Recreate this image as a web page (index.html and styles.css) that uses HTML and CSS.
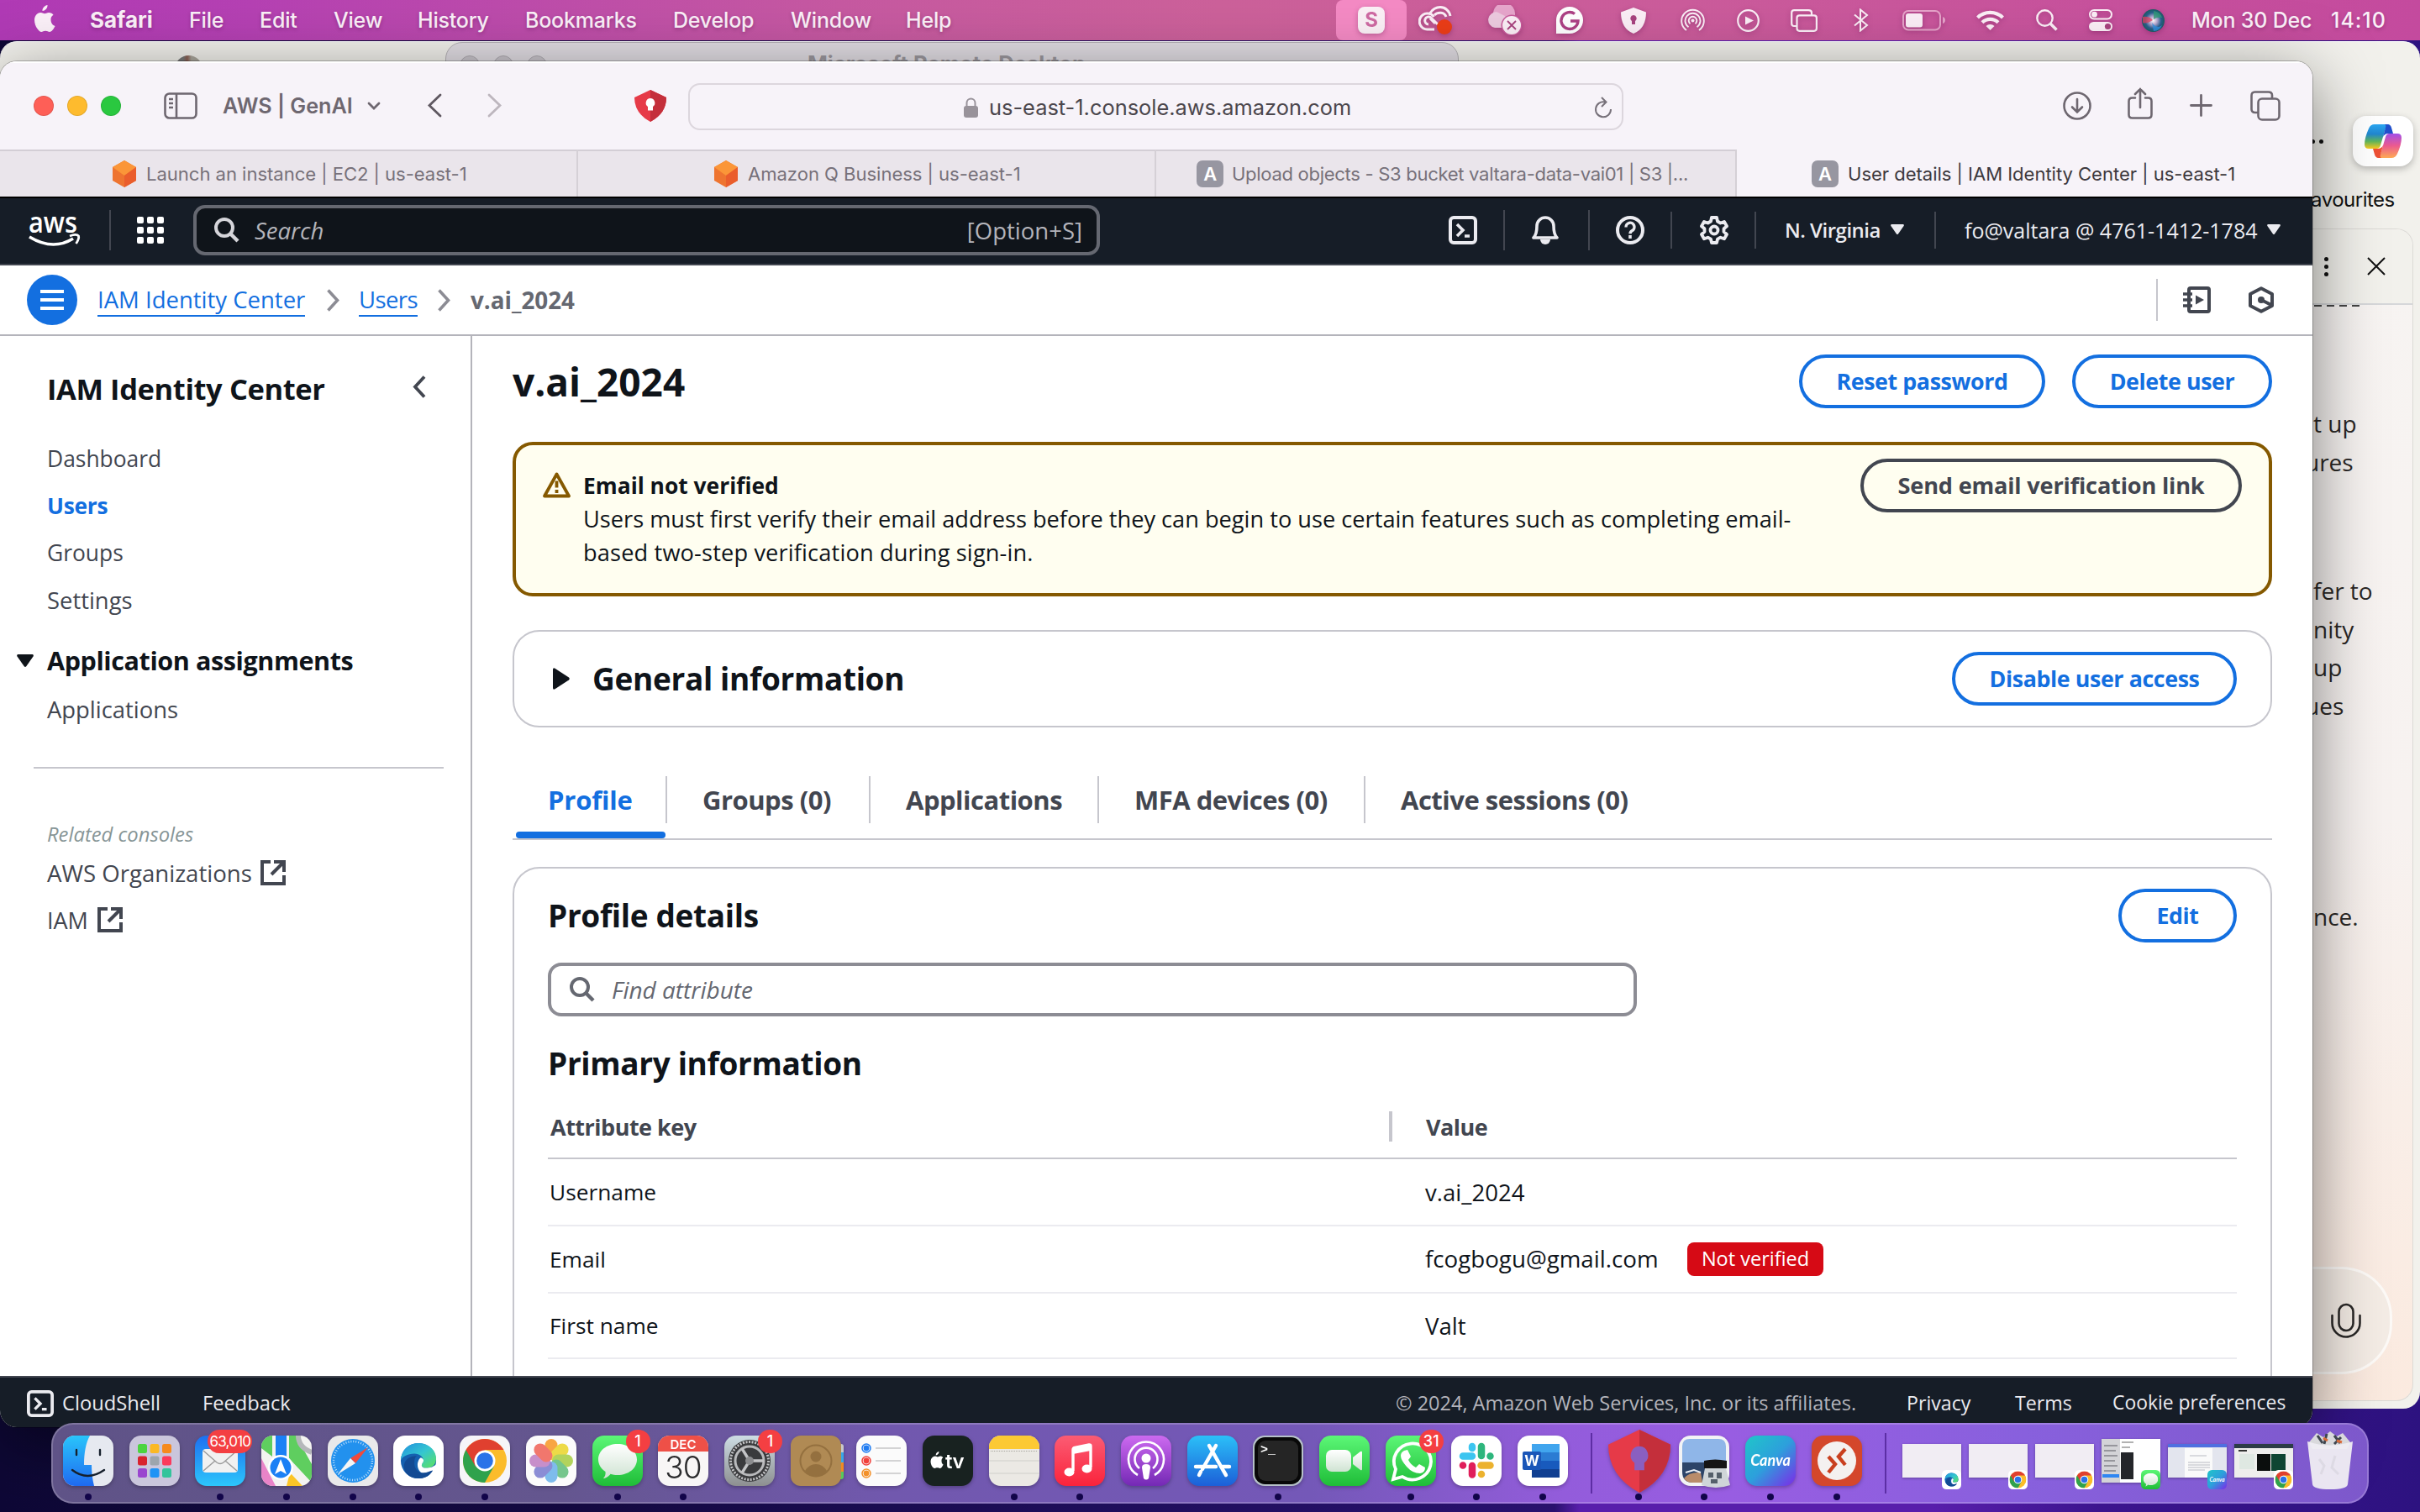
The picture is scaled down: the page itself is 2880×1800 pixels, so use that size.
FILE: index.html
```html
<!DOCTYPE html>
<html lang="en">
<head>
<meta charset="utf-8">
<title>User details | IAM Identity Center | us-east-1</title>
<link rel="stylesheet" href="styles.css">
</head>
<body>
<svg class="defs" width="0" height="0">
  <defs>
    <linearGradient id="gBlue" x1="0" y1="0" x2="0" y2="1"><stop offset="0" stop-color="#1d6ff0"/><stop offset="1" stop-color="#2cc6fb"/></linearGradient>
    <linearGradient id="gBlueR" x1="0" y1="0" x2="0" y2="1"><stop offset="0" stop-color="#2bc0f8"/><stop offset="1" stop-color="#1c5fd8"/></linearGradient>
    <linearGradient id="gGreen" x1="0" y1="0" x2="0" y2="1"><stop offset="0" stop-color="#5cf777"/><stop offset="1" stop-color="#1fbd38"/></linearGradient>
    <linearGradient id="gRed" x1="0" y1="0" x2="0" y2="1"><stop offset="0" stop-color="#fb5c74"/><stop offset="1" stop-color="#fa233b"/></linearGradient>
    <linearGradient id="gPurple" x1="0" y1="0" x2="0" y2="1"><stop offset="0" stop-color="#cd6af0"/><stop offset="1" stop-color="#7429b5"/></linearGradient>
    <linearGradient id="gWhite" x1="0" y1="0" x2="0" y2="1"><stop offset="0" stop-color="#ffffff"/><stop offset="1" stop-color="#cfe3d2"/></linearGradient>
    <linearGradient id="gFinder" x1="0" y1="0" x2="0" y2="1"><stop offset="0" stop-color="#29c5fb"/><stop offset="1" stop-color="#1f6af0"/></linearGradient>
    <linearGradient id="gGear" x1="0" y1="0" x2="0" y2="1"><stop offset="0" stop-color="#cddde4"/><stop offset="1" stop-color="#8d8f90"/></linearGradient>
    <linearGradient id="gCanva" x1="0" y1="0" x2="1" y2="1"><stop offset="0" stop-color="#1fc6c9"/><stop offset=".5" stop-color="#2d9fdc"/><stop offset="1" stop-color="#7d2ae8"/></linearGradient>
    <linearGradient id="gEdge" x1="0" y1="0" x2="1" y2="1"><stop offset="0" stop-color="#1f8fe0"/><stop offset=".5" stop-color="#35c6d0"/><stop offset="1" stop-color="#5fe35a"/></linearGradient>
    <linearGradient id="gCoA" x1="0" y1="0" x2="0" y2="1"><stop offset="0" stop-color="#2ba7f2"/><stop offset=".4" stop-color="#2187d0"/><stop offset=".7" stop-color="#5fb65c"/><stop offset="1" stop-color="#fccb1e"/></linearGradient>
    <linearGradient id="gCoB" x1="0" y1="0" x2="0" y2="1"><stop offset="0" stop-color="#a24fe8"/><stop offset=".5" stop-color="#ec5a8f"/><stop offset="1" stop-color="#ffab55"/></linearGradient>
    <radialGradient id="gSiri"><stop offset="0" stop-color="#ffffff"/><stop offset=".35" stop-color="#b6a9cf"/><stop offset=".7" stop-color="#2a5f8e"/><stop offset="1" stop-color="#1c5c63"/></radialGradient>
    <symbol id="tri" viewBox="0 0 16 12"><path d="M1 0h14q1.4.6.6 2L9 11.400q-1 1-2 0L.4 2Q-.4.600 1 0z"/></symbol>
    <symbol id="cube" viewBox="0 0 28 32"><path d="M14 0l14 8v16l-14 8-14-8V8z" fill="#ee7430"/><path d="M14 0l14 8-14 10L0 8z" fill="#fb9638"/><path d="M14 18L28 8v16l-14 8z" fill="#ea5d2c"/></symbol>
    <symbol id="guard" viewBox="0 0 76 76"><path d="M38 0l38 18Q76 56 38 76Q0 56 0 18z" fill="#e63a48"/><path d="M38 0l38 18Q76 56 38 76z" fill="#c42f3b"/><path d="M38 20a11 11 0 0 1 6 20v9H32v-9a11 11 0 0 1 6-20z" fill="#fff"/></symbol>
    <symbol id="shell" viewBox="0 0 34 34"><rect x="2" y="2" width="30" height="30" rx="4" fill="none" stroke="currentColor" stroke-width="4"/><path d="M10 10l7 7-7 7M19 24h6" fill="none" stroke="currentColor" stroke-width="3.600"/></symbol>
    <symbol id="lens" viewBox="0 0 30 30"><circle cx="12" cy="12" r="10" fill="none" stroke="currentColor" stroke-width="4"/><path d="M19 19l9 9" stroke="currentColor" stroke-width="4.400"/></symbol>
    <symbol id="ext" viewBox="0 0 30 30"><path d="M12 2H2v26h26V18M16 2h12v12M27 3L13 17" fill="none" stroke="currentColor" stroke-width="4"/></symbol>
    <symbol id="chrome" viewBox="0 0 52 52"><circle cx="26" cy="26" r="26" fill="#fbbc2b"/><path d="M26 26L3.500 13A26 26 0 0 0 26 52l11-19.500z" fill="#2fa24c"/><path d="M26 13h22.500a26 26 0 0 0-45 0L15 33z" fill="#e0402f"/><circle cx="26" cy="26" r="12.500" fill="#fff"/><circle cx="26" cy="26" r="9.800" fill="#2b73e8"/></symbol>
    <symbol id="edge" viewBox="0 0 46 46"><circle cx="23" cy="23" r="22" fill="#1560b0"/><path d="M1 22C2 8 12 1 23 1c13 0 22 9 22 19 0 9-7 12-12 12-6 0-7-3-5-6 3-6-2-12-10-12C9 14 3 18 1 22z" fill="url(#gEdge)"/><path d="M28 26c-2 3-1 6 5 6 5 0 10-2 14-6l-1 10c-3 3-8 4-13 4-7 0-12-6-11-14 1-4 2-6 4-7 4 2 4 4 2 7z" fill="#fff"/><path d="M18 24c-1 8 4 14 11 14 5 0 9-3 12-3-4 7-10 10-18 10C12 45 5 38 5 30c0-8 7-13 16-13-2 1-3 4-3 7z" fill="#134a93"/></symbol>
    <symbol id="bubble" viewBox="0 0 46 42"><path d="M23 0C36 0 46 8 46 18.500S36 37 23 37c-3 0-6-.4-8.500-1.300C13 38 9 41 6 41c2-2 3-5 2.500-8C3 29.500 0 24 0 18.500 0 8 10 0 23 0z" fill="url(#gWhite)"/></symbol>
  </defs>
</svg>

<div class="desktop">

  <div class="menubar">
    <div class="menu">
      <svg width="27" height="33" viewBox="0 0 27 33" fill="#fbf0f8"><path d="M18.500 0c.3 3.500-2.600 7-6 7C12.200 3.600 15.300.4 18.500 0zM22.500 17c0-3.400 2.800-5 3-5.200-1.600-2.400-4.200-2.700-5-2.800-2.200-.2-4.200 1.300-5.300 1.300S12.400 9 10.500 9C8 9 5.600 10.500 4.300 12.700c-2.700 4.700-.7 11.600 2 15.400 1.300 1.800 2.800 3.900 4.800 3.800s2.700-1.200 5-1.200 3 1.200 5 1.200c2.100 0 3.400-1.900 4.700-3.700.8-1.200 1.100-1.700 1.700-3.100-4.500-1.700-5-6-5-8.100z" transform="translate(-2 0)"/></svg>
      <b class="app">Safari</b><span>File</span><span>Edit</span><span>View</span><span>History</span><span>Bookmarks</span><span>Develop</span><span>Window</span><span>Help</span>
    </div>
    <div class="status">
      <div class="rec"><svg width="32" height="32" viewBox="0 0 32 32"><rect width="32" height="32" rx="8" fill="#fbf0f6"/><text x="16" y="24" text-anchor="middle" class="s-letter">S</text></svg></div>
      <svg width="40" height="34" viewBox="0 0 40 34" fill="none" stroke="#fbeef6" stroke-width="3"><path d="M19 28h-8.500a9.500 9.500 0 1 1 8-15"/><path d="M14 8.500C17 4 21 1.600 26 1.600c6 0 11 4.400 12 10.400M20 21l-6-6"/><path d="M12 22a4.500 4.500 0 1 1 3-8l8 8M19 11c4-4 12-4 14 2"/><circle cx="31" cy="25" r="9" fill="#ec3d17" stroke="none"/></svg>
      <svg width="41" height="36" viewBox="0 0 41 36"><path d="M7 9a12 12 0 0 1 26 3l-4 8-20-6z" fill="#e6a5cb"/><path d="M9 27A9 9 0 1 1 12 8.500l18 9L20 27z" fill="#eccadf"/><circle cx="29" cy="24" r="12.500" fill="#c85a9b"/><circle cx="29" cy="24" r="11" fill="#fbeef6"/><path d="M24 19l10 10M34 19L24 29" stroke="#a8437f" stroke-width="1.800"/></svg>
      <svg width="32" height="32" viewBox="0 0 32 32"><path d="M0 32V16a16 16 0 1 1 16 16z" fill="#fff"/><path d="M22 8.500A10 10 0 1 0 26 17h-9" fill="none" stroke="#ad4185" stroke-width="3.400"/></svg>
      <svg width="30" height="31" viewBox="0 0 30 31"><path d="M15 0l15 5.500Q30 25 15 31Q0 25 0 5.500z" fill="#fbeef6"/><path d="M15 9a4 4 0 0 1 2 7.300V20h-4v-3.700A4 4 0 0 1 15 9z" fill="#a8437f"/></svg>
      <svg width="29" height="29" viewBox="0 0 29 29" fill="none" stroke="#fbeef6" stroke-width="1.900"><path d="M7 26A13.300 13.300 0 1 1 22 26M9.500 22.300a9 9 0 1 1 10 0M11.500 18.300a4.800 4.800 0 1 1 6 0"/><circle cx="14.500" cy="14.600" r="2" fill="#fbeef6" stroke="none"/></svg>
      <svg width="27" height="27" viewBox="0 0 27 27"><circle cx="13.500" cy="13.500" r="12.300" fill="none" stroke="#fbeef6" stroke-width="2.200"/><path d="M10 8.500l10 5-10 5z" fill="#fbeef6"/></svg>
      <svg width="32" height="27" viewBox="0 0 32 27" fill="none" stroke="#fbeef6" stroke-width="2.200"><path d="M7 20H4q-2.800 0-2.800-3V4q0-2.800 3-2.800h17Q25 1.200 25 4v3"/><rect x="7.500" y="7.300" width="23.400" height="18.500" rx="3"/></svg>
      <svg width="18" height="28" viewBox="0 0 18 28" fill="none" stroke="#fbeef6" stroke-width="2"><path d="M1 7.500l15 12.500-8 6.500V1.500L16 8 1 20.500"/></svg>
      <svg width="51" height="25" viewBox="0 0 51 25"><rect x="1" y="1" width="44" height="22.500" rx="6" fill="none" stroke="#e5a3c9" stroke-width="2"/><rect x="4" y="4" width="20" height="16.500" rx="3" fill="#fbeef6"/><path d="M48 8q3 1 3 4t-3 4z" fill="#e5a3c9"/></svg>
      <svg width="33" height="25" viewBox="0 0 33 25" fill="none" stroke="#fbeef6" stroke-width="4.200"><path d="M1.500 9a21.500 21.500 0 0 1 30 0M7 14.700a13.500 13.500 0 0 1 19 0"/><path d="M16.500 24l-5-5a7 7 0 0 1 10 0z" fill="#fbeef6" stroke="none"/></svg>
      <svg width="26" height="26" viewBox="0 0 26 26" fill="none" stroke="#fbeef6"><circle cx="10.500" cy="10.500" r="9.200" stroke-width="2.400"/><path d="M17 17l7.500 7.500" stroke-width="3.600"/></svg>
      <svg width="28" height="26" viewBox="0 0 28 26"><rect x="1" y="1" width="26" height="10.500" rx="5.200" fill="none" stroke="#fbeef6" stroke-width="2"/><circle cx="6.500" cy="6.200" r="3.400" fill="#fbeef6"/><rect y="15" width="28" height="11" rx="5.500" fill="#fbeef6"/><circle cx="22.500" cy="20.500" r="3.600" fill="#a8437f"/></svg>
      <svg width="27" height="27" viewBox="0 0 27 27"><circle cx="13.500" cy="13.500" r="13.500" fill="url(#gSiri)"/><path d="M1 9q8-1 12 4-8 5-12 3z" fill="#e0405f" opacity=".75"/><path d="M14 2q8 1 10 8-6-1-10 2z" fill="#2f9a76" opacity=".8"/><path d="M12 16q6 8 12 3-3 7-10 7z" fill="#2f8fe0" opacity=".8"/></svg>
      <span>Mon 30 Dec</span><span class="time">14:10</span>
    </div>
  </div>

  <div class="window edge-window">
    <div class="avatar"></div>
    <div class="edge-side">
      <div class="edge-tools"><span class="dots"><i></i><i></i></span>
        <div class="copilot"><svg width="44" height="40" viewBox="0 0 44 40"><path d="M12 0h18q-4 1-6 8l-5 17q-1 4-5 4H5q-5 0-5-5Q0 16 5 5 7 0 12 0z" fill="url(#gCoA)"/><path d="M24 0h3q4 0 5 4l2 7h-6q-4 0-6 4l3-11q1-3-1-4z" fill="#2150cc"/><path d="M32 40H14q4-1 6-8l5-17q1-4 5-4h9q5 0 5 5 0 8-5 19-2 5-7 5z" fill="url(#gCoB)"/><path d="M20 40h-3q-4 0-5-4l-2-7h6q4 0 6-4l-3 11q-1 3 1 4z" fill="#ee5136"/></svg></div>
      </div>
      <div class="fav">avourites</div>
      <div class="edge-panel">
        <div class="edge-panel-head"><span class="vdots"><i></i><i></i><i></i></span><svg width="22" height="22" viewBox="0 0 22 22" stroke="#111" stroke-width="2"><path d="M1 1l20 20M21 1L1 21"/></svg></div>
        <div class="scrolled"><i></i><i></i><i></i><i></i></div>
        <div class="edge-text">
          <p>t up</p><p class="in-s">ures</p>
          <p class="gap-a">fer to</p><p>nity</p><p>up</p><p class="in-s">ues</p>
          <p class="gap-b">nce.</p>
        </div>
        <div class="mic"><svg width="36" height="43" viewBox="0 0 36 43" fill="none" stroke="#2b2928" stroke-width="2.600" stroke-linecap="round"><rect x="9.500" y="2" width="17" height="31" rx="8.500"/><path d="M1.500 15v9a16.500 16.500 0 0 0 33 0v-9"/></svg></div>
      </div>
    </div>
  </div>

  <div class="window rd-window"><i></i><i></i><i></i><span>Microsoft Remote Desktop</span></div>

  <div class="window safari">
    <div class="toolbar">
      <div class="lights"><i class="red"></i><i class="amber"></i><i class="green"></i></div>
      <svg width="40" height="32" viewBox="0 0 40 32" fill="none" stroke="#6e6770" stroke-width="2.600"><rect x="1.500" y="1.500" width="37" height="29" rx="5"/><path d="M15 2v28M6 8h5M6 13h5M6 18h5"/></svg>
      <span class="profile-name">AWS | GenAI</span>
      <svg width="16" height="10" viewBox="0 0 16 10" fill="none" stroke="#6e6770" stroke-width="2.800" stroke-linecap="round"><path d="M2 2l6 6 6-6"/></svg>
      <svg width="18" height="29" viewBox="0 0 18 29" fill="none" stroke="#5f5861" stroke-width="2.800" stroke-linecap="round"><path d="M16 2L3 14.500 16 27"/></svg>
      <svg width="18" height="29" viewBox="0 0 18 29" fill="none" stroke="#bdb6be" stroke-width="2.800" stroke-linecap="round"><path d="M2 2l13 12.500L2 27"/></svg>
      <svg width="38" height="38" viewBox="0 0 76 76"><use href="#guard"/></svg>
      <div class="address">
        <svg width="17" height="24" viewBox="0 0 17 24"><rect y="10" width="17" height="14" rx="3" fill="#98929a"/><path d="M3.500 11V6.500a5 5 0 0 1 10 0V11" fill="none" stroke="#98929a" stroke-width="2"/></svg>
        <span>us-east-1.console.aws.amazon.com</span>
        <svg class="reload" width="22" height="26" viewBox="0 0 22 26" fill="none" stroke="#77717a" stroke-width="2"><path d="M13 6.500a9 9 0 1 0 7 8.500M9 1l5.500 5.500L9 12"/></svg>
      </div>
      <svg width="34" height="34" viewBox="0 0 34 34" fill="none" stroke="#6e6770" stroke-width="2.600" stroke-linecap="round"><circle cx="17" cy="17" r="15.500"/><path d="M17 9v15M11 18.500l6 6 6-6"/></svg>
      <svg class="up" width="30" height="38" viewBox="0 0 30 38" fill="none" stroke="#6e6770" stroke-width="2.600" stroke-linecap="round"><path d="M9 12.500H5.500q-4 0-4 4v16q0 4 4 4h19q4 0 4-4v-16q0-4-4-4H21M15 24V2M9 8l6-6 6 6"/></svg>
      <svg width="27" height="27" viewBox="0 0 27 27" stroke="#6e6770" stroke-width="2.800" stroke-linecap="round"><path d="M13.500 1.500v24M1.500 13.500h24"/></svg>
      <svg width="36" height="36" viewBox="0 0 36 36" fill="none" stroke="#6e6770" stroke-width="2.600"><path d="M9 26H6q-4.500 0-4.500-4V6q0-4.500 4-4.500h16q4.500 0 4.500 4V9"/><rect x="9.500" y="9.500" width="25" height="25" rx="4.500"/></svg>
    </div>
    <div class="tabs">
      <div class="tab"><svg width="28" height="32"><use href="#cube"/></svg><span>Launch an instance | EC2 | us-east-1</span></div>
      <div class="tab t2"><svg width="28" height="32"><use href="#cube"/></svg><span>Amazon Q Business | us-east-1</span></div>
      <div class="tab t3"><i class="fav-a">A</i><span>Upload objects - S3 bucket valtara-data-vai01 | S3 |...</span></div>
      <div class="tab active"><i class="fav-a">A</i><span>User details | IAM Identity Center | us-east-1</span></div>
    </div>

    <header class="aws-nav">
      <svg class="aws-logo" width="64" height="48" viewBox="0 0 64 48"><text x="1" y="27" class="aws-word" textLength="58" lengthAdjust="spacingAndGlyphs">aws</text><path d="M2 32q28 17 52 2" fill="none" stroke="#fff" stroke-width="3.600"/><path d="M50 31q8-3 10.500 0 1 3-3 9" fill="none" stroke="#fff" stroke-width="2.800"/></svg>
      <i class="vr tall"></i>
      <div class="dots9"><i></i><i></i><i></i><i></i><i></i><i></i><i></i><i></i><i></i></div>
      <div class="nav-search"><svg width="30" height="30"><use href="#lens"/></svg><em>Search</em><span>[Option+S]</span></div>
      <svg width="34" height="34"><use href="#shell"/></svg>
      <i class="vr tall"></i>
      <svg width="32" height="34" viewBox="0 0 32 34"><path d="M2 26h28q-4-4-4-14a10 10 0 0 0-20 0q0 10-4 14z" fill="none" stroke="currentColor" stroke-width="3.600" stroke-linejoin="round"/><path d="M10 28a6 6 0 0 0 12 0z" fill="currentColor"/></svg>
      <i class="vr tall"></i>
      <svg width="34" height="34" viewBox="0 0 34 34" fill="none" stroke="currentColor" stroke-width="4"><circle cx="17" cy="17" r="15"/><path d="M12 13.500a5 5 0 1 1 7.500 4q-2.500 1.500-2.500 3.700" stroke-width="3.400"/><path d="M17 23v4" stroke-width="3.600"/></svg>
      <i class="vr"></i>
      <svg width="34" height="34" viewBox="0 0 34 34" fill="none" stroke="currentColor" stroke-width="3.800" stroke-linejoin="round"><path d="M14 2h6l1 4.500 3.500 2L29 7l3 5.300-3.500 3v3.600L32 22l-3 5.200-4.500-1.500-3.500 2L20 32h-6l-1-4.300-3.500-2L5 27.200 2 22l3.500-3.100v-3.600L2 12.300 5 7l4.500 1.500 3.500-2z"/><circle cx="17" cy="17" r="4.500"/></svg>
      <i class="vr"></i>
      <span class="nv">N. Virginia</span><svg class="caret" width="16" height="12" fill="currentColor"><use href="#tri"/></svg>
      <i class="vr"></i>
      <span class="acct">fo@valtara @ 4761-1412-1784</span><svg class="caret" width="16" height="12" fill="currentColor"><use href="#tri"/></svg>
    </header>

    <div class="crumbs">
      <div class="burger"><i></i><i></i><i></i></div>
      <a class="c1">IAM Identity Center</a>
      <svg width="15" height="27" viewBox="0 0 15 27" fill="none" stroke="#8c8c94" stroke-width="3.600"><path d="M1.500 1.500l11 12-11 12"/></svg>
      <a class="c2">Users</a>
      <svg width="15" height="27" viewBox="0 0 15 27" fill="none" stroke="#8c8c94" stroke-width="3.600"><path d="M1.500 1.500l11 12-11 12"/></svg>
      <b>v.ai_2024</b>
      <i class="vr light"></i>
      <svg width="33" height="32" viewBox="0 0 33 32" fill="none" stroke="#424650" stroke-width="4"><rect x="7" y="2" width="24" height="28" rx="2"/><path d="M0 9h11M0 16h11M0 23h11" stroke-width="3.400"/><path d="M15 10.500v11l10-5.500z" fill="#424650" stroke="none"/></svg>
      <svg width="30" height="32" viewBox="0 0 30 32" fill="none" stroke="#424650" stroke-width="4" stroke-linejoin="round"><path d="M15 2.300L28 9v14l-13 6.700L2 23V9z"/><circle cx="15" cy="16" r="4" fill="#424650" stroke="none"/><path d="M15 16l12 6"/></svg>
    </div>

    <div class="body">
      <nav class="side">
        <div class="side-title"><h2>IAM Identity Center</h2><svg width="16" height="27" viewBox="0 0 16 27" fill="none" stroke="#424650" stroke-width="3.800"><path d="M14 1.500L3 13.500l11 12"/></svg></div>
        <a>Dashboard</a><a class="on">Users</a><a>Groups</a><a class="wide-a">Settings</a>
        <div class="section"><svg width="20" height="15" fill="#0f141a"><use href="#tri"/></svg><b>Application assignments</b></div>
        <a class="wide-a">Applications</a>
        <hr>
        <em>Related consoles</em>
        <a class="orgs">AWS Organizations <svg width="30" height="30"><use href="#ext"/></svg></a>
        <a class="iam">IAM <svg width="30" height="30"><use href="#ext"/></svg></a>
      </nav>

      <main class="main">
        <div class="head"><h1>v.ai_2024</h1><button class="btn w-reset">Reset password</button><button class="btn w-del">Delete user</button></div>
        <div class="alert">
          <svg width="33" height="31" viewBox="0 0 33 31" fill="none" stroke="#855900" stroke-width="3.800" stroke-linejoin="round"><path d="M16.500 2.500L31 28.500H2z"/><path d="M16.500 10.500v8M16.500 21v4"/></svg>
          <div class="alert-text"><b>Email not verified</b><p>Users must first verify their email address before they can begin to use certain features such as completing email-</p><p class="l2">based two-step verification during sign-in.</p></div>
          <button class="btn dark w-send">Send email verification link</button>
        </div>
        <div class="card general"><svg width="20" height="26" viewBox="0 0 20 26"><path d="M0 2Q0-.5 2.500.7L19 11.500q1.500 1.500 0 3L2.500 25.300Q0 26.500 0 24z" fill="#0f141a"/></svg><h3>General information</h3><button class="btn w-dis">Disable user access</button></div>
        <div class="ptabs"><span class="pt1">Profile</span><span class="pt2">Groups (0)</span><span class="pt3">Applications</span><span class="pt4">MFA devices (0)</span><span class="pt5">Active sessions (0)</span></div>
        <div class="card details">
          <div class="details-head"><h3>Profile details</h3><button class="btn w-edit">Edit</button></div>
          <div class="find"><svg width="30" height="30"><use href="#lens"/></svg><em>Find attribute</em></div>
          <h3 class="primary">Primary information</h3>
          <div class="row th"><b>Attribute key</b><i></i><b>Value</b></div>
          <div class="row"><span>Username</span><span class="val">v.ai_2024</span></div>
          <div class="row"><span>Email</span><span class="mail">fcogbogu@gmail.com</span><u class="pill">Not verified</u></div>
          <div class="row short"><span>First name</span><span class="val">Valt</span></div>
        </div>
      </main>
    </div>

    <footer class="foot">
      <svg width="34" height="34"><use href="#shell"/></svg><span class="f1">CloudShell</span><span class="f2">Feedback</span><span class="f3">© 2024, Amazon Web Services, Inc. or its affiliates.</span><span class="f4">Privacy</span><span class="f5">Terms</span><span class="f6">Cookie preferences</span>
    </footer>
  </div>

  <div class="dock">
    <div class="apps-row">
      <div class="ic run"><svg viewBox="0 0 60 60"><rect width="60" height="60" rx="14" fill="#e6e9f0"/><path d="M14 0h18c-5 9-7 21-7 35h9c0 9 1 17 3 25H14A14 14 0 0 1 0 46V14A14 14 0 0 1 14 0z" fill="url(#gFinder)"/><path d="M16 17v6M44 17v6M11 41q18 14 38 0" fill="none" stroke="#16202c" stroke-width="2.400" stroke-linecap="round"/></svg></div>
      <div class="ic"><svg viewBox="0 0 60 60"><rect width="60" height="60" rx="14" fill="#cac6dc"/><g><rect x="10" y="10" width="11" height="11" rx="2.500" fill="#4cd43f"/><rect x="24.500" y="10" width="11" height="11" rx="2.500" fill="#fbb824"/><rect x="39" y="10" width="11" height="11" rx="2.500" fill="#f68a1e"/><rect x="10" y="24.500" width="11" height="11" rx="2.500" fill="#d9222e"/><rect x="24.500" y="24.500" width="11" height="11" rx="2.500" fill="#9da5ad"/><rect x="39" y="24.500" width="11" height="11" rx="2.500" fill="#fb3a5c"/><rect x="10" y="39" width="11" height="11" rx="2.500" fill="#9a45cf"/><rect x="24.500" y="39" width="11" height="11" rx="2.500" fill="#1f93f5"/><rect x="39" y="39" width="11" height="11" rx="2.500" fill="#33c49b"/></g></svg></div>
      <div class="ic run"><svg viewBox="0 0 60 60"><rect width="60" height="60" rx="14" fill="url(#gBlue)"/><rect x="9" y="16" width="42" height="28" rx="4" fill="#f1f1f1"/><path d="M10 18l16 14q4 3 8 0l16-14M10 42l14-12M50 42L36 30" fill="none" stroke="#9a9a9a" stroke-width="1.400"/></svg><span class="badge wide">63,010</span></div>
      <div class="ic run"><svg viewBox="0 0 60 60"><clipPath id="r"><rect width="60" height="60" rx="14"/></clipPath><g clip-path="url(#r)"><path d="M0 0h60v60H0z" fill="#f3f3f1"/><path d="M0 0h13v25L0 15zM33 0h8l19 34v22L33 27z" fill="#5fce5f"/><path d="M0 27l17 33H0z" fill="#e884c8"/><path d="M34 44l15 16H30z" fill="#fcc526"/><path d="M17 0h13v28H17z" fill="#1b80f5"/><path d="M44 0q0 14 16 20" fill="none" stroke="#b5b7ba" stroke-width="6"/></g><circle cx="23" cy="38" r="15" fill="#fff"/><circle cx="23" cy="38" r="12.500" fill="#1b80f5"/><path d="M23 28l7 18-7-4-7 4z" fill="#fff"/></svg></div>
      <div class="ic run"><svg viewBox="0 0 60 60"><rect width="60" height="60" rx="14" fill="#e9e9ea"/><circle cx="30" cy="30" r="26" fill="#2291ee"/><circle cx="30" cy="30" r="23" fill="none" stroke="#bfe0fb" stroke-width="2.500" stroke-dasharray="1 2"/><path d="M48 14L33 33l-6-6z" fill="#f04a3c"/><path d="M12 46l15-19 6 6z" fill="#f5f5f5"/></svg></div>
      <div class="ic run"><svg viewBox="0 0 60 60"><rect width="60" height="60" rx="14" fill="#fff"/><svg x="8" y="8" width="44" height="44"><use href="#edge"/></svg></svg></div>
      <div class="ic run"><svg viewBox="0 0 60 60"><rect width="60" height="60" rx="14" fill="#f6f5f8"/><svg x="4" y="4" width="52" height="52"><use href="#chrome"/></svg></svg></div>
      <div class="ic"><svg viewBox="0 0 60 60"><rect width="60" height="60" rx="14" fill="#fbfbfb"/><g opacity=".88"><rect x="22.500" y="4" width="15" height="25" rx="7.500" fill="#f89a2b"/><rect x="22.500" y="4" width="15" height="25" rx="7.500" fill="#ecd62f" transform="rotate(45 30 30)"/><rect x="22.500" y="4" width="15" height="25" rx="7.500" fill="#a9ce47" transform="rotate(90 30 30)"/><rect x="22.500" y="4" width="15" height="25" rx="7.500" fill="#63bf7d" transform="rotate(135 30 30)"/><rect x="22.500" y="4" width="15" height="25" rx="7.500" fill="#6db4ea" transform="rotate(180 30 30)"/><rect x="22.500" y="4" width="15" height="25" rx="7.500" fill="#7c7ed0" transform="rotate(225 30 30)"/><rect x="22.500" y="4" width="15" height="25" rx="7.500" fill="#c081c4" transform="rotate(270 30 30)"/><rect x="22.500" y="4" width="15" height="25" rx="7.500" fill="#f0655a" transform="rotate(315 30 30)"/></g></svg></div>
      <div class="ic run"><svg viewBox="0 0 60 60"><rect width="60" height="60" rx="14" fill="url(#gGreen)"/><svg x="7" y="10" width="46" height="42"><use href="#bubble"/></svg></svg><span class="badge">1</span></div>
      <div class="ic run"><svg viewBox="0 0 60 60"><rect width="60" height="60" rx="14" fill="#f8f6f6"/><path d="M0 19v-5A14 14 0 0 1 14 0h32a14 14 0 0 1 14 14v5z" fill="#ee5047"/><text x="30" y="15.500" class="cal-m">DEC</text><text x="30" y="51" class="cal-d">30</text></svg></div>
      <div class="ic"><svg viewBox="0 0 60 60"><rect width="60" height="60" rx="14" fill="url(#gGear)"/><circle cx="30" cy="30" r="25" fill="#3a3b3d"/><circle cx="30" cy="30" r="22.500" fill="none" stroke="#c3c4c6" stroke-width="3" stroke-dasharray="2 1.600"/><circle cx="30" cy="30" r="17" fill="none" stroke="#b9babc" stroke-width="3"/><path d="M30 30h17M30 30l-9-14.500M30 30l-9 14.500" stroke="#c3c4c6" stroke-width="3.400"/><circle cx="30" cy="30" r="5" fill="#8b8c8e"/></svg><span class="badge">1</span></div>
      <div class="ic"><svg viewBox="0 0 60 60"><path d="M56 10h4q3 0 3 3v7h-7z" fill="#c9c9c9"/><path d="M56 20h7v12h-7z" fill="#39a7e8"/><path d="M56 32h7v11h-7z" fill="#f08a24"/><path d="M56 43h7v6q0 3-3 3h-4z" fill="#58c95a"/><rect width="60" height="60" rx="12" fill="#b08a54"/><circle cx="30" cy="30" r="18.500" fill="none" stroke="#94703f" stroke-width="2"/><circle cx="30" cy="25" r="6.500" fill="#94703f"/><path d="M17 42q5-8 13-8t13 8q-6 6-13 6t-13-6z" fill="#94703f"/></svg></div>
      <div class="ic"><svg viewBox="0 0 60 60"><rect width="60" height="60" rx="14" fill="#fbfbfb"/><g stroke-width="1.500" fill="none"><circle cx="12" cy="15" r="5" stroke="#1f7cf2"/><circle cx="12" cy="30" r="5" stroke="#f1403a"/><circle cx="12" cy="45" r="5" stroke="#f3912a"/><path d="M23 15h30M23 30h30M23 45h30" stroke="#c6c6c8"/></g><circle cx="12" cy="15" r="3.400" fill="#1f7cf2"/><circle cx="12" cy="30" r="3.400" fill="#f1403a"/><circle cx="12" cy="45" r="3.400" fill="#f3912a"/></svg></div>
      <div class="ic"><svg viewBox="0 0 60 60"><rect width="60" height="60" rx="14" fill="#182220"/><path d="M19.500 19c.2 2.200-1.700 4.300-3.800 4.400-.2-2.200 1.700-4.200 3.800-4.400zM22.500 29.500c0-2.200 1.800-3.200 1.800-3.200-1-1.500-2.600-1.700-3.100-1.700-1.400-.1-2.600.8-3.300.8s-1.700-.8-2.900-.8c-3.600.1-6 3.700-5.300 8 .5 3.200 2.500 6.400 4.700 6.300 1.200 0 1.700-.7 3.100-.7s1.800.7 3.100.7c1.300 0 2.100-1.200 2.900-2.400.5-.7.7-1.100 1.100-2-2.100-.9-2.100-3.500-2.100-5z" fill="#fff"/><text x="27" y="39" class="tv">tv</text></svg></div>
      <div class="ic run"><svg viewBox="0 0 60 60"><rect width="60" height="60" rx="14" fill="#ebe9e4"/><path d="M0 16v-2A14 14 0 0 1 14 0h32a14 14 0 0 1 14 14v2z" fill="#fcc934"/><path d="M2 18.500h56" stroke="#a9a7a0" stroke-width="1" stroke-dasharray="1 1"/><path d="M0 30h60M0 45h60" stroke="#d9d7d2" stroke-width="1.400"/></svg></div>
      <div class="ic run"><svg viewBox="0 0 60 60"><rect width="60" height="60" rx="14" fill="url(#gRed)"/><path d="M22 42V17q0-2 2-2.500L41 11q2-.3 2 1.500V38" fill="none" stroke="#fff" stroke-width="3.400"/><path d="M22 15l21-4v7l-21 4z" fill="#fff"/><ellipse cx="17.500" cy="43.500" rx="6" ry="5" fill="#fff"/><ellipse cx="38.500" cy="39.500" rx="6" ry="5" fill="#fff"/></svg></div>
      <div class="ic"><svg viewBox="0 0 60 60"><rect width="60" height="60" rx="14" fill="url(#gPurple)"/><g fill="none" stroke="#fff" stroke-width="2.600"><path d="M20 47a21 21 0 1 1 20 0"/><path d="M22 39a13.500 13.500 0 1 1 16 0"/></g><circle cx="30" cy="27" r="5.500" fill="#fff"/><path d="M25 38q0-4 5-4t5 4l-2 13q-3 3-6 0z" fill="#fff"/></svg></div>
      <div class="ic"><svg viewBox="0 0 60 60"><rect width="60" height="60" rx="14" fill="url(#gBlueR)"/><path d="M26 12l17 30 3 5M34 12L18 40M10 37h24M40 37h10M16 43l-2 4" fill="none" stroke="#fff" stroke-width="4.400" stroke-linecap="round"/></svg></div>
      <div class="ic run"><svg viewBox="0 0 60 60"><rect width="60" height="60" rx="14" fill="#b6c1c8"/><rect x="2" y="2" width="56" height="56" rx="12.500" fill="#080808"/><rect x="6" y="6" width="48" height="48" rx="9" fill="#252525"/><text x="9" y="21" class="term">&gt;_</text></svg></div>
      <div class="ic"><svg viewBox="0 0 60 60"><rect width="60" height="60" rx="14" fill="url(#gGreen)"/><rect x="8" y="17" width="30" height="26" rx="7" fill="url(#gWhite)"/><path d="M40 26l9-7q2-1 2 1v20q0 2-2 1l-9-7z" fill="url(#gWhite)"/></svg></div>
      <div class="ic run"><svg viewBox="0 0 60 60"><rect width="60" height="60" rx="14" fill="url(#gGreen)"/><path d="M9 52l3-12a22 21.500 0 1 1 8 9z" fill="none" stroke="#fff" stroke-width="3.800"/><path d="M22 18l4-1 4 8-3 4q3 6 9 9l4-4 7 4q0 6-6 7-9 0-16-8t-7-13q0-4 4-6z" fill="#fff"/></svg><span class="badge">31</span></div>
      <div class="ic run"><svg viewBox="0 0 60 60"><rect width="60" height="60" rx="14" fill="#fff"/><g stroke-width="8.500" stroke-linecap="round"><path d="M25 13v0M14 24.500h11M25 14v1" stroke="#3cc5f0"/><path d="M36 13v11M46.500 24.500h0" stroke="#2eb67d"/><path d="M35.500 35.500h11M36 46v0" stroke="#ecb22e"/><path d="M25 36v10.500M14 35.500h0" stroke="#e01e5a"/></g></svg></div>
      <div class="ic run"><svg viewBox="0 0 60 60"><rect width="60" height="60" rx="14" fill="#fff"/><path d="M17 10h33v10H17z" fill="#41a5ee"/><path d="M17 20h33v10H17z" fill="#2b7cd3"/><path d="M17 30h33v10H17z" fill="#185abd"/><path d="M17 40h33v10H17z" fill="#103f91"/><rect x="6" y="19" width="22" height="22" rx="2" fill="#1a56b8"/><text x="17" y="36" class="word">W</text></svg></div>
    </div>
    <i class="sep"></i>
    <div class="ic big run"><svg viewBox="0 0 76 76" preserveAspectRatio="none"><path d="M38 0l38 18Q76 56 38 76Q0 56 0 18z" fill="#e63a48"/><path d="M38 0l38 18Q76 56 38 76z" fill="#c42f3b"/><path d="M38 20a11 11 0 0 1 6 20v9H32v-9a11 11 0 0 1 6-20z" fill="#8a5fc0"/></svg></div>
    <div class="apps-row second">
      <div class="ic run"><svg viewBox="0 0 60 60"><rect width="60" height="60" rx="14" fill="#f2f3f5"/><path d="M4 13q0-9 9-9h34q9 0 9 9v20H4z" fill="#8fb6e8"/><path d="M4 32h52v11q0 13-13 13H17Q4 56 4 43z" fill="#2c4468"/><path d="M6 51q6-8 20-7l2 12H17Q9 56 6 51z" fill="#b98c6a"/><path d="M8 44l10-3 8 3" stroke="#e8eef5" stroke-width="2" fill="none"/><path d="M30 30q13-3 27 0v9H30z" fill="#151515"/><path d="M31 39h25l5 20q-17 6-34 0z" fill="#cfd5d8"/><path d="M35 44h6v6h-6zM45 44h6v7h-6zM38 52h8v5h-8z" fill="#55606a"/></svg></div>
      <div class="ic run"><svg viewBox="0 0 60 60"><rect width="60" height="60" rx="14" fill="url(#gCanva)"/><text x="30" y="36" class="canva">Canva</text></svg></div>
      <div class="ic run"><svg viewBox="0 0 60 60"><rect width="60" height="60" rx="14" fill="#d4472b"/><circle cx="30" cy="30" r="23" fill="#f4f1f0"/><path d="M20 25l8 9-8 10M40 16l-8 9 8 10" fill="none" stroke="#c9401f" stroke-width="4.400"/></svg></div>
    </div>
    <i class="sep"></i>
    <div class="thumbs">
      <div class="th-w"><svg class="mini" viewBox="0 0 60 60"><rect width="60" height="60" rx="14" fill="#fff"/><svg x="8" y="8" width="44" height="44"><use href="#edge"/></svg></svg></div>
      <div class="th-w"><svg class="mini" viewBox="0 0 60 60"><rect width="60" height="60" rx="14" fill="#fff"/><svg x="4" y="4" width="52" height="52"><use href="#chrome"/></svg></svg></div>
      <div class="th-w"><svg class="mini" viewBox="0 0 60 60"><rect width="60" height="60" rx="14" fill="#fff"/><svg x="4" y="4" width="52" height="52"><use href="#chrome"/></svg></svg></div>
      <div class="th-w tallw"><svg class="shot" viewBox="0 0 70 52"><path d="M0 0h70v52H0z" fill="#fff"/><path d="M0 0h22v52H0z" fill="#d3d3d7"/><path d="M3 8h16M3 14h14M3 20h16M3 26h13M3 32h16M3 38h14" stroke="#96969c" stroke-width="2"/><path d="M1 42h20v4H1z" fill="#2f86f2"/><path d="M23 16h15v32H23z" fill="#24262a"/><path d="M24 4h14M24 10h10" stroke="#999" stroke-width="1.500"/></svg><svg class="mini" viewBox="0 0 60 60"><rect width="60" height="60" rx="14" fill="url(#gGreen)"/><svg x="7" y="10" width="46" height="42"><use href="#bubble"/></svg></svg></div>
      <div class="th-w"><svg class="shot" viewBox="0 0 70 40"><path d="M0 0h70v40H0z" fill="#e3e5ee"/><path d="M0 0h70v4H0z" fill="#4f6fe0"/><path d="M20 5h33v35H20z" fill="#fafafa"/><path d="M26 14h20M24 22h26M24 25h26M24 28h26M24 31h20" stroke="#b8bac2" stroke-width="1"/></svg><svg class="mini" viewBox="0 0 60 60"><rect width="60" height="60" rx="14" fill="url(#gCanva)"/><text x="30" y="36" class="canva">Canva</text></svg></div>
      <div class="th-w"><svg class="shot" viewBox="0 0 70 40"><path d="M0 0h70v40H0z" fill="#eeeeec"/><path d="M0 0h70v5H0z" fill="#2c3c46"/><path d="M6 12h18v18H6z" fill="#dfe8e2"/><path d="M27 12h16v20H27z" fill="#0b0e0d"/><path d="M44 12h17v20H44z" fill="#0e4532"/><path d="M5 8h10" stroke="#333" stroke-width="2"/></svg><svg class="mini" viewBox="0 0 60 60"><rect width="60" height="60" rx="14" fill="#fff"/><svg x="4" y="4" width="52" height="52"><use href="#chrome"/></svg></svg></div>
    </div>
    <svg class="trash" width="56" height="70" viewBox="0 0 56 70"><path d="M3 14L12 3l8 5 8-7 8 6 7-4 9 11-4 8H7z" fill="#d9d9dc"/><path d="M13 6l6 9M24 4l-3 12M33 6l7 9M41 8l-8 8" stroke="#3e4650" stroke-width="3"/><path d="M20 9l5 3M36 12l6 2" stroke="#d96a3a" stroke-width="3"/><path d="M1 13q27 9 54 0l-6 51q-1 6-21 6T7 64z" fill="#eeecf2" opacity=".96"/><path d="M15 34l6 8-4 10M34 30l-4 14 8 8" fill="none" stroke="#dddae4" stroke-width="3"/></svg>
  </div>
</div>
</body>
</html>
```
FILE: styles.css
```css
* { box-sizing: border-box; margin: 0; padding: 0; }
body { width: 2880px; height: 1800px; overflow: hidden; font-family: "Open Sans", "Noto Sans", sans-serif; }
svg { display: block; flex: none; }
i, em { font-style: normal; }
.defs { position: absolute; }
.desktop {
  position: relative; width: 2880px; height: 1800px; overflow: hidden;
  background: linear-gradient(90deg, #0e0836 0, #150a42 700px, #1f0f5c 1300px, #2a1270 1850px, #5a1fae 1880px, #5a1fae 2300px, #3c1590 2500px, #2d1280 2880px);
}

/* macOS menu bar */
.menubar {
  position: relative; height: 48px; display: flex; justify-content: space-between;
  padding: 0 39px 0 40px; background: linear-gradient(90deg, #b03ab5 0, #b541b3 300px, #c659a1 1000px, #cc619a 1450px, #cb5c9b 2000px, #c44a9e 2880px);
  font: 500 25px/48px "Inter", sans-serif; color: #fbf0f8; text-shadow: 0 2px 4px rgba(70, 0, 60, .3); letter-spacing: -.2px; white-space: nowrap;
}
.menu { display: grid; grid-template-columns: 67px 118px 84px 88px 100px 128px 176px 140px 137px 60px; align-items: center; }
.menu svg { margin-bottom: 3px; }
.app { font-size: 26px; font-weight: 700; letter-spacing: 0; }
.menu span, .menu b, .status span { margin-top: -1px; }
.status { display: grid; grid-template-columns: 98px 82px 82px 77px 71px 67px 64px 75px 58px 88px 71px 63px 63px 59px 166px 67px; align-items: center; }
.status svg { filter: drop-shadow(0 2px 3px rgba(80, 0, 60, .3)); }
.time { letter-spacing: 1px; }
.rec { width: 84px; height: 48px; border-radius: 8px; background: #f48ac4; display: grid; place-items: center; }
.s-letter { font: 700 24px "Inter", sans-serif; fill: #cf6aa3; text-shadow: none; }

.window { position: absolute; overflow: hidden; }

/* Edge window behind */
.edge-window {
  left: 0; top: 49px; width: 2880px; height: 1628px; border-radius: 20px;
  background: #f2f1ec; border-top: 1px solid #fff; display: flex; justify-content: flex-end;
}
.avatar { width: 33px; height: 33px; border-radius: 50%; background: linear-gradient(90deg, #777 30%, #8c5f52 45%, #aaa69c 60%); margin: 16px auto 0 208px; }
.edge-side { width: 136px; display: flex; flex-direction: column; padding-top: 88px; }
.edge-tools { display: flex; align-items: center; gap: 31px; height: 60px; padding-left: 6px; }
.dots { display: flex; gap: 5px; }
.dots i, .vdots i { display: block; width: 5px; height: 5px; border-radius: 50%; background: #111; }
.copilot { width: 72px; height: 60px; border-radius: 16px; background: #fff; box-shadow: 0 3px 8px rgba(0, 0, 0, .25); display: grid; place-items: center; margin-left: 4px; }
.fav { font: 400 24px/36px "Inter", sans-serif; letter-spacing: -.5px; color: #111; margin: 22px 0 0 6px; }
.edge-panel {
  width: 128px; height: 1396px; margin-top: 16px; border: 1px solid #dcdad6; border-left: 0; border-radius: 0 20px 20px 0;
  background: linear-gradient(180deg, #f7f4f2 0, #f7f2f0 700px, #fbeadf 1396px);
}
.edge-panel-head { height: 90px; background: #f2f1ec; border-bottom: 2px solid #d6d7d9; border-radius: 0 20px 0 0; display: flex; align-items: center; gap: 46px; padding-left: 22px; }
.vdots { display: flex; flex-direction: column; gap: 4px; }
.scrolled { display: flex; gap: 6px; height: 2px; padding-left: 10px; }
.scrolled i { width: 9px; height: 2px; background: #444; }
.edge-text { padding: 117px 0 0 9px; font-size: 28px; line-height: 45.5px; color: #2b2826; height: 1143px; }
.in-s { margin-left: -10px; }
.edge-text .gap-a { margin-top: 108px; }
.edge-text .gap-b { margin-top: 206px; }
.mic { width: 103px; height: 128px; border: 3px solid #fdfaf7; border-left: 0; border-radius: 0 60px 60px 0; background: #f4ece5; display: flex; align-items: center; padding-left: 30px; }

.rd-window {
  left: 530px; top: 50px; width: 1206px; height: 60px; border-radius: 20px 20px 0 0; background: #e1dde3; border: 1px solid #b5b2b6;
  display: flex; gap: 16px; padding: 15px 0 0 16px; color: #9c989e; font: 700 25.600px/36px "Inter", sans-serif;
}
.rd-window i { width: 24px; height: 24px; border-radius: 50%; background: #c8c4ca; border: 1px solid #aeaab0; }
.rd-window span { margin: -8px 0 0 294px; white-space: nowrap; }

/* Safari */
.safari {
  left: 0; top: 73px; width: 2752px; height: 1626px; border-radius: 20px; background: #fff;
  box-shadow: 0 0 0 1px rgba(0, 0, 0, .25), 0 20px 80px rgba(0, 0, 0, .5); display: flex; flex-direction: column;
}
.toolbar {
  height: 105px; flex: none; background: #f7f3f9; border-top: 2px solid #fff; display: grid; align-items: center; padding: 0 0 2px 40px;
  grid-template-columns: 155px 71px 171px 71px 72px 175px 64px 1636px 77px 74px 72px 36px;
}
.lights { display: flex; gap: 16px; }
.lights i { width: 24px; height: 24px; border-radius: 50%; border: 1px solid rgba(0, 0, 0, .1); }
.red { background: #fe5f57; } .amber { background: #febb2e; } .green { background: #2ac840; }
.profile-name { font: 600 25.200px/32px "Inter", sans-serif; color: #6e6770; white-space: nowrap; margin-left: -1px; }
.address {
  width: 1113px; height: 56px; border: 2px solid #dcd6dd; border-radius: 14px; display: flex; align-items: center; justify-content: flex-start; gap: 13px; padding: 2px 0 0 326px;
  font: 400 25.400px/36px "Inter", sans-serif; color: #4b464c; margin-top: 2px;
}
.reload { margin-left: 276px; }
.up { margin-bottom: 6px; }
.tabs { height: 56px; flex: none; display: grid; grid-template-columns: 688px 688px 691px 1fr; font: 400 22.100px/32px "Inter", sans-serif; color: #77717a; }
.tab { background: #eae5eb; border-top: 2px solid #d3ced5; border-right: 2px solid #d5d0d6; display: flex; align-items: center; gap: 12px; padding-left: 134px; white-space: nowrap; letter-spacing: -.05px; }
.tab.t2 { padding-left: 162px; }
.tab.t3 { padding-left: 48px; gap: 10px; letter-spacing: -.33px; }
.tab.active { background: #f7f3f9; border-color: #f7f3f9; padding-left: 89px; gap: 11px; color: #3d393e; }
.fav-a { width: 32px; height: 32px; border-radius: 7px; background: #9796a1; color: #fff; font-weight: 600; font-size: 22px; text-align: center; }

/* AWS top navigation */
.aws-nav {
  height: 82px; flex: none; background: #161d27; border-top: 2px solid #000; border-bottom: 2px solid #424650; color: #ebebf0;
  display: grid; align-items: center; padding: 0 0 2px 33px; white-space: nowrap;
  grid-template-columns: 97px 33px 67px 1494px 65px 34px 67px 33px 65px 35px 65px 36px 126px 52px 36px 360px 20px;
}
.aws-logo { overflow: visible; }
.aws-word { font: 600 35px "Open Sans", sans-serif; fill: #fff; }
.vr { width: 2px; height: 44px; background: #424650; }
.vr.tall { height: 48px; }
.dots9 { width: 32px; display: grid; grid-template-columns: repeat(3, 8px); gap: 4px; }
.dots9 i { width: 8px; height: 8px; background: #fff; border-radius: 2px; }
.nav-search { width: 1079px; height: 60px; border: 4px solid #656871; border-radius: 14px; background: #0f141a; display: flex; align-items: center; padding: 0 17px 0 21px; gap: 18px; font-size: 27.500px; color: #b4b4bb; }
.nav-search em { flex: 1; font-style: italic; }
.nav-search svg { color: #d5d5da; }
.nv { font-size: 24px; font-weight: 600; letter-spacing: -.5px; margin-top: -1px; }
.acct { font-size: 25px; font-weight: 500; margin-top: -1px; }
.caret { margin-top: -2px; }

.crumbs {
  height: 84px; flex: none; border-bottom: 2px solid #b4b4bb; display: grid; align-items: center; padding-left: 32px; font-size: 27.500px;
  grid-template-columns: 84px 273px 38px 94px 40px 2005px 32px 78px 30px;
}
.burger { width: 60px; height: 60px; border-radius: 50%; background: #136fe0; display: flex; flex-direction: column; align-items: center; justify-content: center; gap: 6px; }
.burger i { width: 28px; height: 4px; background: #fff; }
.crumbs a { color: #136fe0; justify-self: start; line-height: 36px; border-bottom: 2px solid #136fe0; margin-top: 2px; white-space: nowrap; }
.crumbs .c2 { letter-spacing: -.6px; }
.crumbs b { font-weight: 700; font-size: 27.800px; color: #656871; margin-left: -1px; }
.vr.light { height: 50px; background: #c6c6cd; }

.body { height: 1238px; flex: none; display: grid; grid-template-columns: 562px 1fr; overflow: hidden; }
.side { border-right: 2px solid #b4b4bb; padding-top: 33px; font-size: 26.400px; color: #424650; }
.side-title { display: flex; align-items: center; justify-content: space-between; height: 60px; padding: 0 53px 2px 56px; margin-bottom: 25px; }
.side-title svg { margin-bottom: 4px; }
h2 { font-size: 34.500px; font-weight: 700; letter-spacing: -.4px; color: #0f141a; white-space: nowrap; }
.side a { display: flex; align-items: center; gap: 11px; height: 56px; padding-left: 56px; }
.side a.on { color: #136fe0; font-weight: 700; letter-spacing: -.3px; }
.side a.wide-a { font-size: 27.400px; }
.section { display: flex; align-items: center; gap: 16px; height: 56px; margin-top: 16px; padding-left: 20px; font-size: 30.500px; letter-spacing: -.4px; color: #0f141a; white-space: nowrap; }
.side a.wide-a + hr { border: 0; height: 2px; background: #c6c6cd; margin: 41px 32px 0 40px; }
.section + a { margin-top: 2px; }
.side em { display: block; font-style: italic; font-size: 23.800px; line-height: 40px; color: #879596; padding-left: 56px; margin: 58px 0 -2px; }
.side a.orgs { font-size: 27.600px; gap: 10px; }
.side a.iam { font-size: 27px; }

.main { padding: 22px 48px 0 48px; color: #0f141a; font-size: 26.300px; }
.head { display: flex; align-items: center; height: 64px; }
h1 { font-size: 46px; font-weight: 700; margin-right: auto; }
.btn {
  height: 64px; flex: none; border: 4px solid #136fe0; border-radius: 40px; background: #fff; color: #136fe0;
  font: 700 26.800px/40px "Open Sans", sans-serif; letter-spacing: -.4px; white-space: nowrap; text-align: center;
}
.btn.dark { border-color: #424650; color: #424650; background: transparent; font-size: 27.200px; letter-spacing: -.2px; }
.w-reset { width: 293px; } .w-del { width: 238px; margin-left: 32px; } .w-send { width: 454px; margin-left: auto; } .w-dis { width: 339px; margin-left: auto; } .w-edit { width: 141px; }
.alert { margin-top: 40px; height: 184px; border: 4px solid #855900; border-radius: 24px; background: #fffef0; display: flex; padding: 16px 32px 0 32px; }
.alert svg { margin: 16px 0 0; }
.alert-text { margin: 12px 0 0 15px; font-size: 27.200px; line-height: 40px; white-space: nowrap; }
.alert-text b { display: block; font-weight: 700; font-size: 26.400px; }
.alert-text .l2 { letter-spacing: .15px; }
.card { border: 2px solid #c6c6cd; border-radius: 32px; }
.general { margin-top: 40px; height: 116px; display: flex; align-items: center; padding: 0 40px 0 46px; gap: 27px; }
h3 { font-size: 37px; font-weight: 700; letter-spacing: -.35px; white-space: nowrap; line-height: 50px; }
.ptabs { margin-top: 48px; height: 86px; border-bottom: 2px solid #c6c6cd; padding: 10px 0 18px; display: flex; font-size: 31px; font-weight: 700; color: #424650; line-height: 56px; white-space: nowrap; }
.ptabs span { position: relative; padding-left: 42px; border-right: 2px solid #c6c6cd; letter-spacing: -.5px; }
.ptabs .pt1 { width: 184px; color: #136fe0; letter-spacing: -.2px; }
.pt1::after { content: ""; position: absolute; left: 4px; right: 0; bottom: -18px; height: 8px; border-radius: 4px; background: #136fe0; }
.pt2 { width: 242px; } .pt3 { width: 272px; } .pt4 { width: 317px; }
.ptabs .pt5 { border: 0; }
.details { margin-top: 32px; height: 800px; padding: 24px 40px 0; }
.details-head { display: flex; justify-content: space-between; align-items: center; height: 64px; }
.find { margin-top: 24px; width: 1296px; height: 64px; border: 4px solid #8c8c94; border-radius: 16px; display: flex; align-items: center; gap: 20px; padding-left: 22px; color: #656871; font-size: 28px; }
.find em { font-style: italic; }
.primary { margin: 31px 0 13px; }
.row { display: grid; grid-template-columns: 1042px 311px 200px; align-items: center; height: 80px; border-bottom: 2px solid #ebebf0; padding-left: 2px; white-space: nowrap; }
.row.short { height: 78px; }
.row.th { grid-template-columns: 999px 43px 1fr; height: 76px; border-color: #c6c6cd; color: #424650; font-size: 27px; letter-spacing: -.5px; }
.th b { font-weight: 700; padding-left: 1px; }
.th i { width: 4px; height: 36px; background: #c6c6cd; }
.val { font-size: 27.600px; }
.mail { font-size: 27.700px; margin-top: -2px; }
.pill { text-decoration: none; width: 162px; height: 40px; border-radius: 8px; background: #d60a15; color: #fff; font-size: 23.500px; line-height: 39px; text-align: center; margin-left: 1px; }

.foot {
  height: 61px; flex: none; background: #161d27; border-top: 2px solid #424650; color: #ebebf0; display: grid; align-items: center; padding: 0 0 0 32px;
  grid-template-columns: 42px 167px 1420px 608px 129px 116px 1fr; font-size: 23.200px; white-space: nowrap;
}
.foot svg { width: 32px; height: 32px; margin-top: 2px; }
.foot .f1, .foot .f2 { font-size: 23.700px; }
.foot .f3 { color: #b4b4bb; font-size: 23.500px; }
.foot .f6 { font-size: 22.900px; }

/* Dock */
.dock {
  position: absolute; left: 61px; top: 1694px; width: 2758px; height: 96px; border-radius: 26px; border: 2px solid rgba(255, 255, 255, .2);
  background: linear-gradient(90deg, #5f5387 0, #64568f 600px, #7158ae 1000px, #7458b8 1500px, #935cdb 1800px, #985de2 2000px, #8860dd 2350px, #7d58cb 2758px) border-box;
  display: flex; padding: 13px 0 0 12px;
}
.apps-row { display: flex; gap: 18.700px; }
.ic { position: relative; width: 60px; height: 60px; flex: none; }
.ic > svg { width: 60px; height: 60px; overflow: visible; filter: drop-shadow(0 2px 2px rgba(0, 0, 0, .25)); }
.ic.run::after { content: ""; position: absolute; left: 26px; top: 69px; width: 8px; height: 8px; border-radius: 50%; background: #12054a; }
.badge { position: absolute; left: 40px; top: -7px; width: 29px; height: 28px; border-radius: 14px; background: #f43f42; color: #fff; font: 500 18px/28px "Inter", sans-serif; text-align: center; }
.badge.wide { left: 15px; width: 53px; font-size: 17px; letter-spacing: -.8px; font-weight: 400; }
.cal-m { font: 600 15px "Inter", sans-serif; fill: #fff; text-anchor: middle; }
.cal-d { font: 300 37px "Inter", sans-serif; fill: #2c2c2e; text-anchor: middle; letter-spacing: -1px; }
.tv { font: 600 24px "Inter", sans-serif; fill: #fff; letter-spacing: -.5px; }
.term { font: 700 15px "Liberation Mono", monospace; fill: #fff; }
.word { font: 700 17px "Inter", sans-serif; fill: #fff; text-anchor: middle; }
.canva { font: italic 700 18px "Lato", sans-serif; fill: #fff; text-anchor: middle; }
.sep { width: 2px; height: 72px; background: rgba(70, 25, 140, .7); margin: -3px 0 0 27px; }
.second { gap: 19px; }
.ic.big { width: 74px; margin: 0 10px 0 19px; }
.ic.big > svg { width: 74px; height: 75px; margin-top: -7px; }
.ic.big.run::after { left: 32px; top: 69px; }
.sep + .thumbs { margin-left: 19px; }
.thumbs { display: flex; gap: 9px; }
.th-w { position: relative; width: 70px; height: 40px; margin-top: 10px; background: #f1edf3; box-shadow: 0 1px 3px rgba(0, 0, 0, .3); }
.th-w.tallw { height: 52px; margin-top: 4px; }
.shot { width: 100%; height: 100%; }
.mini { position: absolute; right: 0; bottom: -14px; width: 23px; height: 23px; }
.tallw .mini { bottom: -8px; }
.trash { margin: -6px 0 0 16px; }
```
